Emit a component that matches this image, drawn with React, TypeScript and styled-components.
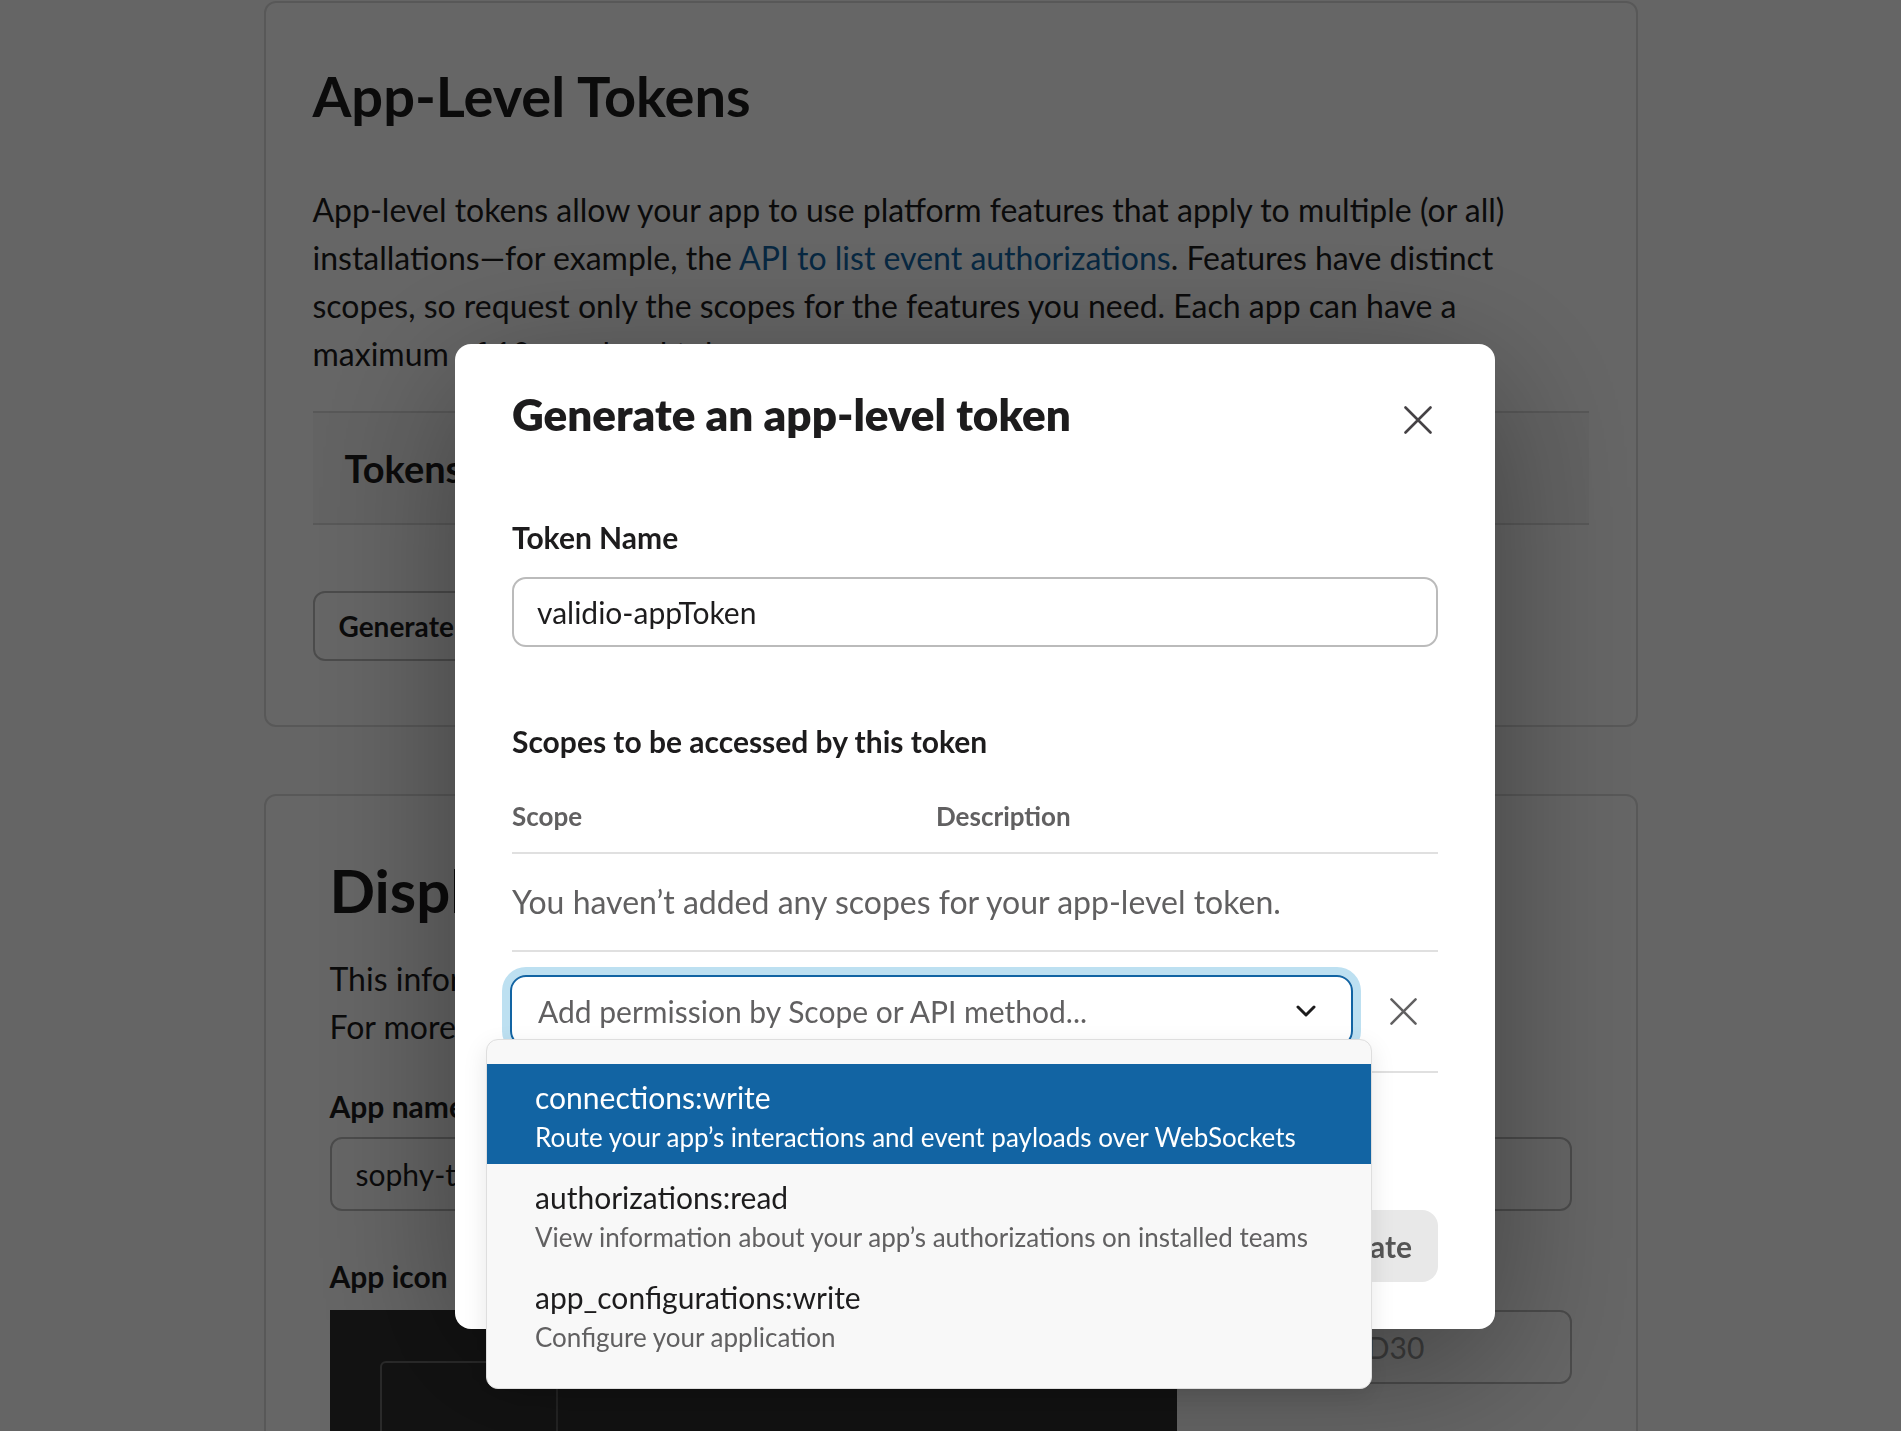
import styled, { createGlobalStyle } from 'styled-components';

const GlobalStyle = createGlobalStyle`
  html, body {
    margin: 0;
    padding: 0;
    overflow: hidden;
    background: #fcfcfc;
  }

  body {
    font-family: Lato, "Noto Sans", "Liberation Sans", sans-serif;
    color: #1d1c1d;
    -webkit-font-smoothing: antialiased;
  }

  * {
    box-sizing: border-box;
  }
`;

/* ---------- page behind the dialog ---------- */

const Page = styled.main`
  width: 1374px;
  margin: 0 auto;
  padding-top: 1px;

  display: flex;
  flex-direction: column;
  gap: 67px;
`;

const Card = styled.section<{ $padTop: number; $padX: number }>`
  background: #fff;
  border: 2px solid #dcdcdc;
  border-radius: 12px;
  padding: ${ p => p.$padTop }px ${ p => p.$padX }px 64px;
`;

const PageTitle = styled.h2<{ $size: number }>`
  margin: 0;
  font-size: ${ p => p.$size }px;
  line-height: ${ p => p.$size + 8 }px;
  font-weight: 700;
`;

const PageText = styled.p<{ $gap: number }>`
  margin: ${ p => p.$gap }px 0 0;
  font-size: 32px;
  line-height: 48px;
`;

const Link = styled.a`
  color: #1264a3;
  text-decoration: none;
`;

const TableBand = styled.div`
  margin-top: 33px;
  height: 114px;

  display: flex;
  align-items: center;

  padding-left: 32px;
  background: #f8f8f8;
  border-top: 2px solid #dcdcdc;
  border-bottom: 2px solid #dcdcdc;

  font-size: 38px;
  font-weight: 700;
`;

const OutlineButton = styled.button`
  height: 70px;
  padding: 0 24px;

  background: #fff;
  border: 2px solid #bcbcbc;
  border-radius: 12px;

  font-family: inherit;
  font-size: 28px;
  font-weight: 700;
  color: #1d1c1d;
`;

const PageButtonRow = styled.div`
  margin-top: 66px;
`;

const FieldLabel = styled.div<{ $gap: number }>`
  margin-top: ${ p => p.$gap }px;
  font-size: 30px;
  line-height: 40px;
  font-weight: 700;
`;

const InputSlot = styled.div`
  margin-top: 11px;
`;

const PageInput = styled.div<{ $width?: number }>`
  height: 74px;
  width: ${ p => p.$width ? `${ p.$width }px` : '100%' };

  display: flex;
  align-items: center;
  gap: 24px;

  padding: 0 24px;
  border: 2px solid #bcbcbc;
  border-radius: 12px;
  background: #fff;

  font-size: 30px;
`;

const MutedValue = styled.span`
  color: #9a9a9a;
`;

const Swatch = styled.span`
  width: 49px;
  height: 40px;
  border-radius: 6px;
  background: #2c2d30;
`;

const IconRow = styled.div`
  margin-top: 14px;

  display: flex;
  align-items: flex-start;
  gap: 19px;
`;

const IconPreview = styled.div`
  width: 847px;
  height: 300px;
  flex-shrink: 0;
  overflow: hidden;

  padding: 51px 0 0 50px;
  background: #2f2f2f;
`;

const PreviewFrame = styled.div`
  width: 1000px;
  height: 300px;

  display: grid;
  grid-template-columns: 176px 1fr;

  border: 2px solid #6a6a6a;
  border-radius: 6px;
`;

const PreviewRail = styled.div`
  border-right: 2px solid #5a5a5a;
`;

/* ---------- dialog ---------- */

const Backdrop = styled.div`
  position: fixed;
  inset: 0;
  background: rgba(0, 0, 0, .6);
`;

const Modal = styled.div`
  position: absolute;
  left: 455px;
  top: 344px;

  width: 1040px;
  padding: 42px 57px 47px;

  background: #fff;
  border-radius: 16px;
  box-shadow: 0 36px 150px rgba(0, 0, 0, .38);
`;

const ModalHeader = styled.div`
  display: flex;
  justify-content: space-between;
  align-items: flex-start;
`;

const ModalTitle = styled.h1`
  margin: 0;
  font-size: 44px;
  line-height: 56px;
  font-weight: 800;
`;

const IconButton = styled.button<{ $top?: number; $width?: number; $color: string }>`
  width: ${ p => p.$width ?? 40 }px;
  height: 40px;
  flex-shrink: 0;
  margin-top: ${ p => p.$top ?? 0 }px;

  display: flex;
  align-items: center;
  justify-content: center;

  padding: 0;
  border: 0;
  background: none;
  color: ${ p => p.$color };
`;

const TextInput = styled.div`
  margin-top: 20px;
  height: 70px;

  display: flex;
  align-items: center;

  padding-left: 23px;
  border: 2px solid #bbb;
  border-radius: 14px;

  font-size: 30px;
`;

const TableHead = styled.div`
  margin-top: 37px;

  display: grid;
  grid-template-columns: 424px 1fr;

  padding-bottom: 18px;
  border-bottom: 2px solid #e0e0e0;

  font-size: 26px;
  line-height: 36px;
  font-weight: 700;
  color: #616061;
`;

const EmptyRow = styled.div`
  padding: 28px 0;
  border-bottom: 2px solid #e0e0e0;

  font-size: 32px;
  line-height: 40px;
  color: #616061;
`;

const SelectRow = styled.div`
  display: flex;
  align-items: center;
  gap: 16px;

  padding: 23px 0 24px;
  border-bottom: 2px solid #e0e0e0;
`;

const Select = styled.div`
  position: relative;
  flex: 1;
  height: 72px;
  margin-left: -2px;

  display: flex;
  align-items: center;
  justify-content: space-between;

  padding: 0 35px 0 26px;
  border: 2px solid #1264a3;
  border-radius: 16px;
  box-shadow: 0 0 0 8px #bde0f1;

  font-size: 30px;
  color: #616061;
`;

const Menu = styled.ul`
  position: absolute;
  top: 62px;
  left: -26px;
  width: 886px;
  z-index: 2;

  margin: 0;
  padding: 24px 0;
  list-style: none;

  background: #f8f8f8;
  border: 1px solid #dedede;
  border-radius: 12px;
  box-shadow: 0 8px 24px rgba(0, 0, 0, .1);
`;

const MenuItem = styled.li<{ $active: boolean }>`
  height: 100px;
  padding: 12px 48px 8px;

  background: ${ p => p.$active ? '#1264a3' : 'transparent' };
  color: ${ p => p.$active ? '#fff' : '#1d1c1d' };
`;

const MenuName = styled.div`
  font-size: 30px;
  line-height: 42px;
`;

const MenuHint = styled.div<{ $active: boolean }>`
  font-size: 26px;
  line-height: 38px;
  color: ${ p => p.$active ? '#fff' : '#616061' };
`;

const Footer = styled.div`
  margin-top: 137px;

  display: flex;
  justify-content: flex-end;
  gap: 16px;
`;

const FooterButton = styled.button<{ $primary?: boolean }>`
  height: 72px;
  padding: 0 24px;

  border: 2px solid ${ p => p.$primary ? 'transparent' : '#bbb' };
  border-radius: 16px;
  background: ${ p => p.$primary ? '#e8e8e8' : '#fff' };

  font-family: inherit;
  font-size: 30px;
  font-weight: 700;
  color: ${ p => p.$primary ? '#555' : '#1d1c1d' };
`;

const scopes = [
  { name: 'connections:write', hint: 'Route your app’s interactions and event payloads over WebSockets' },
  { name: 'authorizations:read', hint: 'View information about your app’s authorizations on installed teams' },
  { name: 'app_configurations:write', hint: 'Configure your application' },
];

function CrossIcon({ size }: { size: number }) {
  return (
    <svg width={size} height={size} viewBox="0 0 28 28" fill="none">
      <path d="M1.5 1.5 26.5 26.5M26.5 1.5 1.5 26.5" stroke="currentColor" strokeWidth="2.6" strokeLinecap="round" />
    </svg>
  );
}

function ChevronIcon() {
  return (
    <svg width="20" height="12" viewBox="0 0 20 12" fill="none">
      <path d="M2 2 10 10 18 2" stroke="#1d1c1d" strokeWidth="3" strokeLinecap="round" strokeLinejoin="round" />
    </svg>
  );
}

export default function App() {
  return (
    <>
      <GlobalStyle />
      <Page>
        <Card $padTop={61} $padX={47}>
          <PageTitle $size={56}>App-Level Tokens</PageTitle>
          <PageText $gap={58}>
            App-level tokens allow your app to use platform features that apply to multiple (or all)
            <br />
            installations—for example, the <Link>API to list event authorizations</Link>. Features have distinct
            <br />
            scopes, so request only the scopes for the features you need. Each app can have a
            <br />
            maximum of 10 app-level tokens per app.
          </PageText>
          <TableBand>Tokens</TableBand>
          <PageButtonRow>
            <OutlineButton>Generate Token and Scopes</OutlineButton>
          </PageButtonRow>
        </Card>

        <Card $padTop={60} $padX={64}>
          <PageTitle $size={60}>Display Information</PageTitle>
          <PageText $gap={31}>
            This information will be shown in Slack.
            <br />
            For more tips, see our guidelines.
          </PageText>
          <FieldLabel $gap={35}>App name</FieldLabel>
          <InputSlot>
            <PageInput>sophy-test</PageInput>
          </InputSlot>
          <FieldLabel $gap={45}>App icon</FieldLabel>
          <IconRow>
            <IconPreview>
              <PreviewFrame>
                <PreviewRail />
                <div />
              </PreviewFrame>
            </IconPreview>
            <PageInput $width={377}>
              <Swatch />
              <MutedValue>#2C2D30</MutedValue>
            </PageInput>
          </IconRow>
        </Card>
      </Page>

      <Backdrop>
        <Modal>
          <ModalHeader>
            <ModalTitle>Generate an app-level token</ModalTitle>
            <IconButton $top={14} $color="#454245">
              <CrossIcon size={28} />
            </IconButton>
          </ModalHeader>

          <FieldLabel $gap={75}>Token Name</FieldLabel>
          <TextInput>validio-appToken</TextInput>

          <FieldLabel $gap={74}>Scopes to be accessed by this token</FieldLabel>
          <TableHead>
            <span>Scope</span>
            <span>Description</span>
          </TableHead>
          <EmptyRow>You haven’t added any scopes for your app-level token.</EmptyRow>

          <SelectRow>
            <Select>
              <span>Add permission by Scope or API method...</span>
              <ChevronIcon />
              <Menu>
                {scopes.map((scope, i) => (
                  <MenuItem key={scope.name} $active={i === 0}>
                    <MenuName>{scope.name}</MenuName>
                    <MenuHint $active={i === 0}>{scope.hint}</MenuHint>
                  </MenuItem>
                ))}
              </Menu>
            </Select>
            <IconButton $width={69} $color="#616061">
              <CrossIcon size={27} />
            </IconButton>
          </SelectRow>

          <Footer>
            <FooterButton>Cancel</FooterButton>
            <FooterButton $primary>Generate</FooterButton>
          </Footer>
        </Modal>
      </Backdrop>
    </>
  );
}
